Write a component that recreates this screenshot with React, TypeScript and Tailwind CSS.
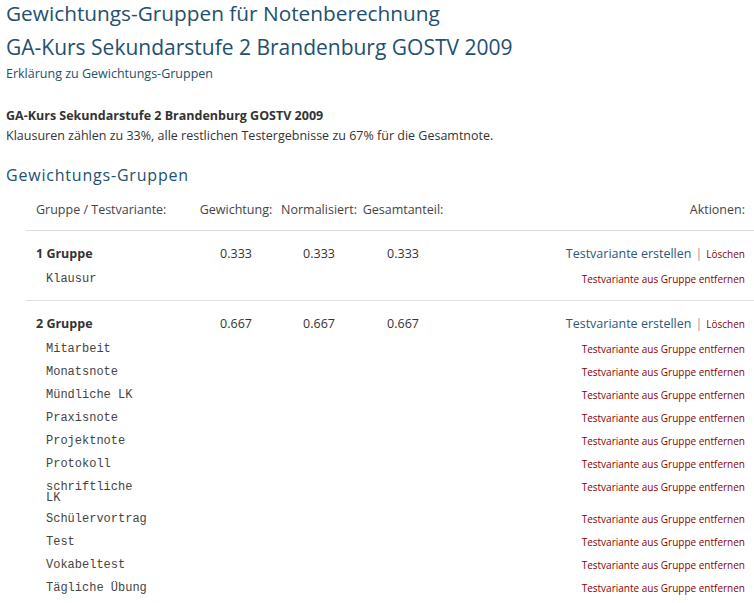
import React from "react";

const sans = { fontFamily: '"Open Sans", "DejaVu Sans", sans-serif' };
const mono = { fontFamily: '"Liberation Mono", "Courier New", monospace' };

type Group = { name: string; w: string; items: string[] };

const groups: Group[] = [
  { name: "1 Gruppe", w: "0.333", items: ["Klausur"] },
  {
    name: "2 Gruppe",
    w: "0.667",
    items: [
      "Mitarbeit",
      "Monatsnote",
      "Mündliche LK",
      "Praxisnote",
      "Projektnote",
      "Protokoll",
      "schriftliche LK",
      "Schülervortrag",
      "Test",
      "Vokabeltest",
      "Tägliche Übung",
    ],
  },
];

function GroupBlock({ g, last }: { g: Group; last: boolean }) {
  return (
    <div className={`border-t border-[#dddddd] pt-[11px] ${last ? "" : "pb-[11px]"}`}>
      <div className="grid grid-cols-[170px_80px_86px_82px_1fr] items-center h-[24px] text-[12.5px] text-[#333]">
        <div className="pl-[10px] font-bold text-[12.5px] text-[#333]">{g.name}</div>
        <div className="text-center">{g.w}</div>
        <div className="text-center">{g.w}</div>
        <div className="text-center">{g.w}</div>
        <div className="text-right pr-[9px] whitespace-nowrap">
          <span className="text-[12.5px] text-[#2b5877]">Testvariante erstellen</span>
          <span className="text-[#999] mx-[4px]">|</span>
          <span className="text-[10px] text-[#8b0000]">Löschen</span>
        </div>
      </div>
      {g.items.map((it) => (
        <div key={it} className="grid grid-cols-[170px_80px_86px_82px_1fr] items-start min-h-[23px] pt-[8px] pb-[2px]">
          <div className="pl-[20px]">
            <div className="w-[104px] text-[12px] leading-[11px] text-[#444]" style={mono}>
              {it}
            </div>
          </div>
          <div />
          <div />
          <div />
          <div className="text-right pr-[9px] text-[10px] leading-[11px] text-[#8b0000] whitespace-nowrap">
            Testvariante aus Gruppe entfernen
          </div>
        </div>
      ))}
    </div>
  );
}

export default function App() {
  return (
    <div className="w-[754px] h-[603px] overflow-hidden bg-white pl-[6px]" style={sans}>
      <h1 className="text-[20.8px] leading-[26px] text-[#23506f]">Gewichtungs-Gruppen für Notenberechnung</h1>
      <h2 className="mt-[8px] text-[21px] leading-[26px] text-[#23506f]">
        GA-Kurs Sekundarstufe 2 Brandenburg GOSTV 2009
      </h2>
      <div className="mt-[5px] text-[12.5px] leading-[18px] text-[#23506f]">Erklärung zu Gewichtungs-Gruppen</div>
      <div className="mt-[23px] text-[12.5px] leading-[19px] font-bold text-[#333]">
        GA-Kurs Sekundarstufe 2 Brandenburg GOSTV 2009
      </div>
      <div className="mt-[1px] text-[12.5px] leading-[19px] text-[#333]">
        Klausuren zählen zu 33%, alle restlichen Testergebnisse zu 67% für die Gesamtnote.
      </div>
      <h3 className="mt-[19px] text-[16px] leading-[22px] tracking-[0.8px] text-[#23506f]">Gewichtungs-Gruppen</h3>
      <div className="ml-[20px] mt-[15px]">
        <div className="grid grid-cols-[170px_80px_86px_82px_1fr] items-center leading-[18px] pb-[11px] text-[12.5px] text-[#444]">
          <div className="pl-[10px]">Gruppe / Testvariante:</div>
          <div className="text-center">Gewichtung:</div>
          <div className="text-center">Normalisiert:</div>
          <div className="text-center">Gesamtanteil:</div>
          <div className="text-right pr-[9px]">Aktionen:</div>
        </div>
        {groups.map((g, i) => (
          <GroupBlock key={g.name} g={g} last={i === groups.length - 1} />
        ))}
      </div>
    </div>
  );
}
